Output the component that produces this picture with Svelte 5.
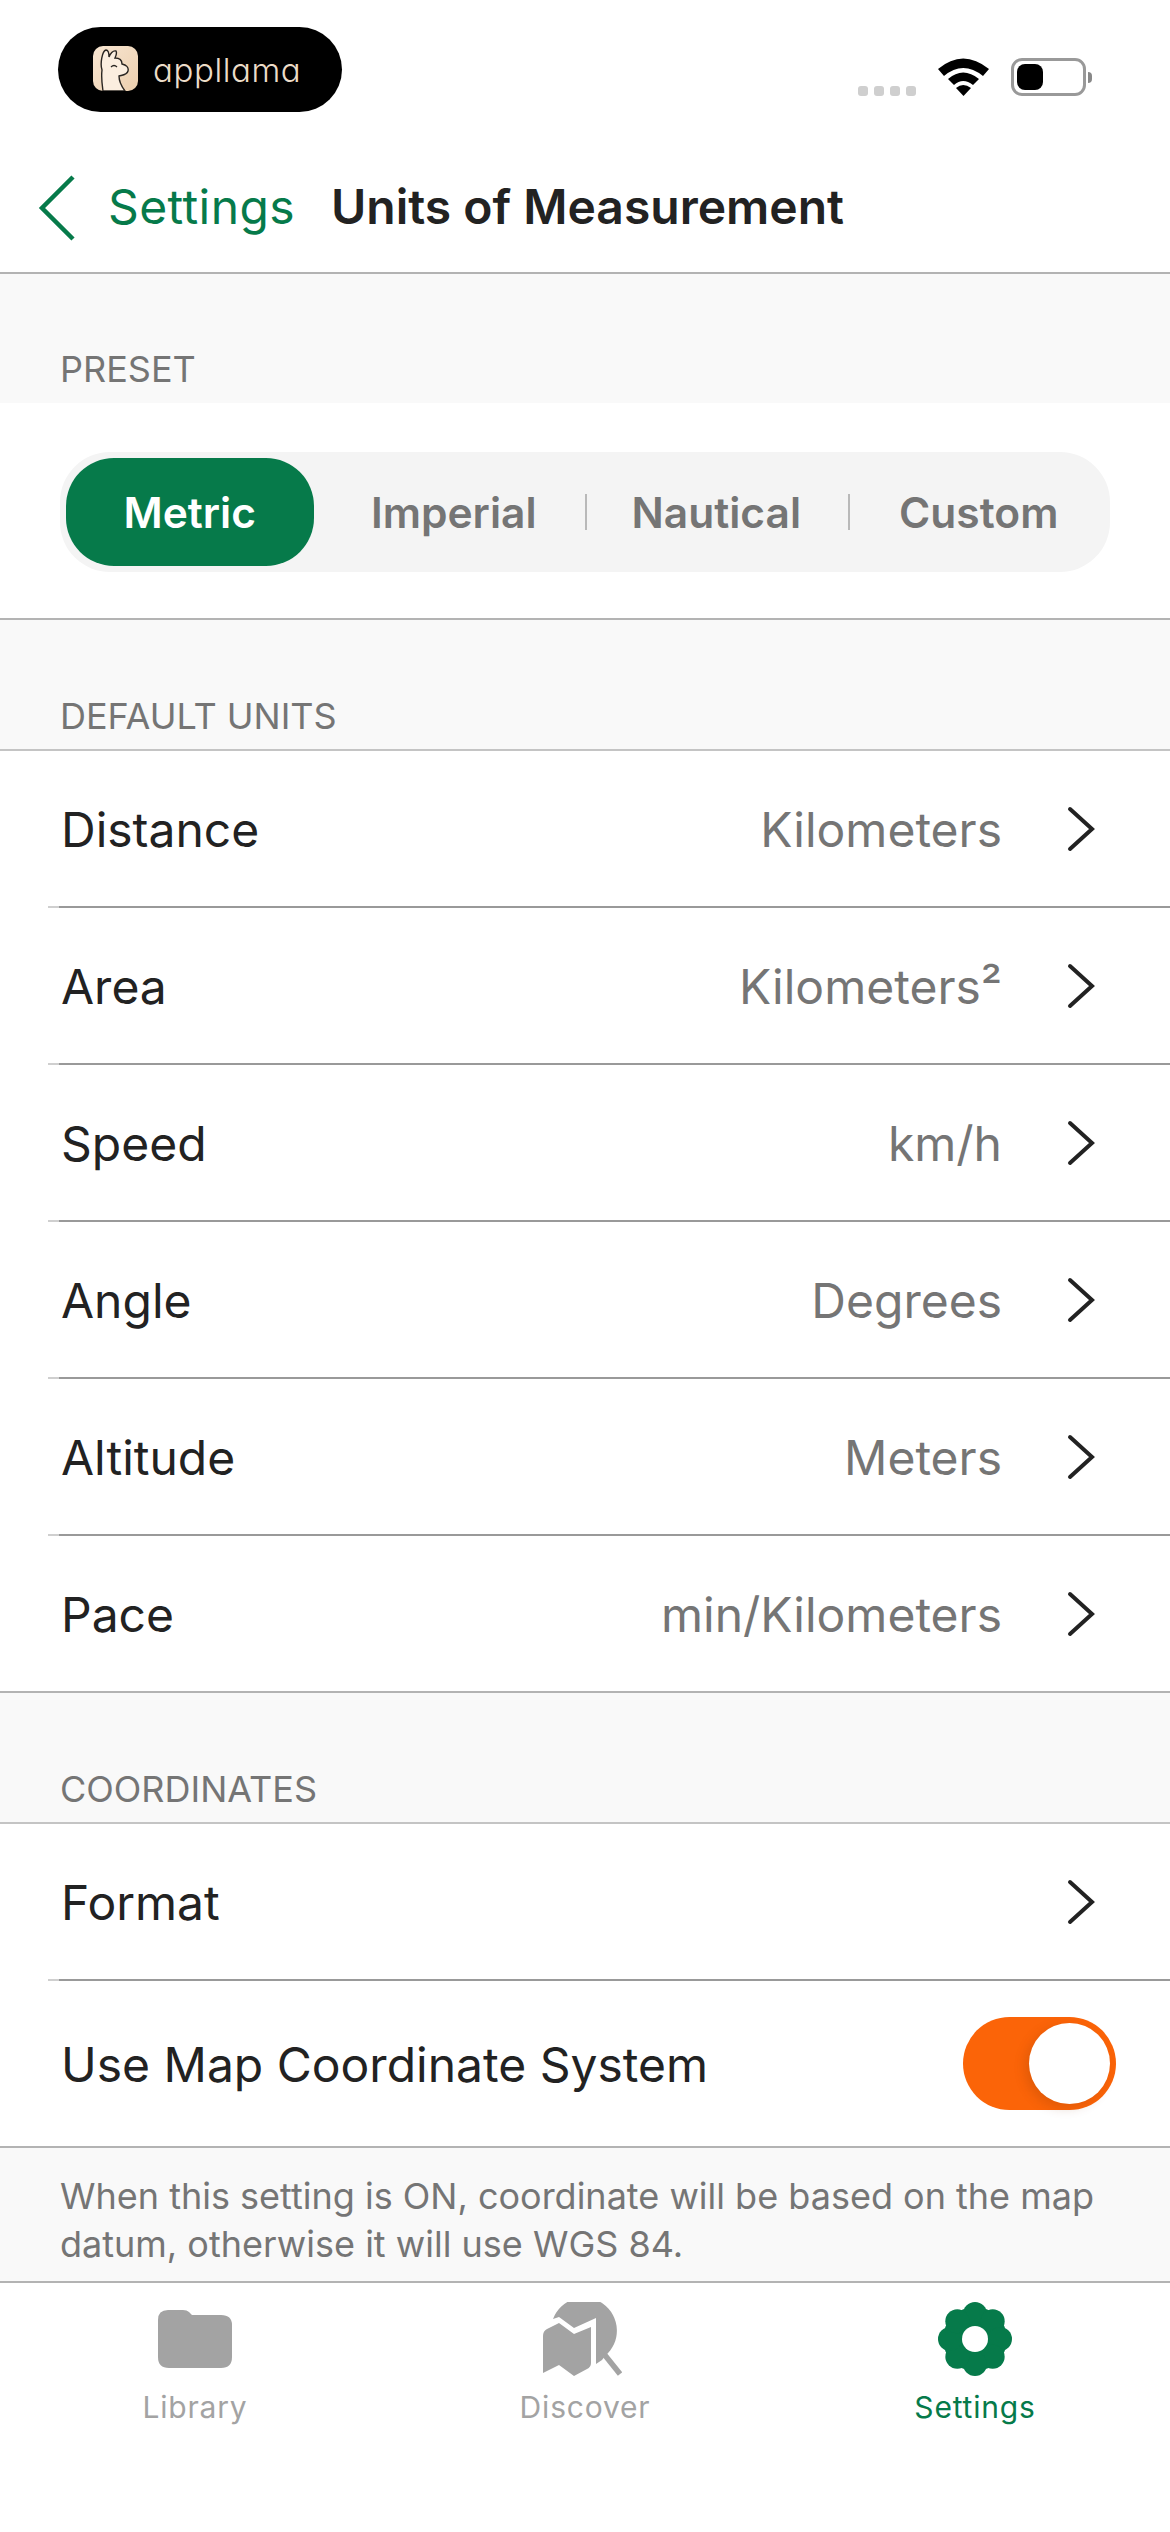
<script lang="ts">
  const presets = ["Metric", "Imperial", "Nautical", "Custom"];
  const units = [
    { name: "Distance", value: "Kilometers" },
    { name: "Area", value: "Kilometers²" },
    { name: "Speed", value: "km/h" },
    { name: "Angle", value: "Degrees" },
    { name: "Altitude", value: "Meters" },
    { name: "Pace", value: "min/Kilometers" },
  ];
  let selected = $state("Metric");
  let useMapSystem = $state(true);
  const lobes = [0, 45, 90, 135, 180, 225, 270, 315];
</script>

{#snippet chevron()}
  <svg class="chevron" width="30" height="46" viewBox="0 0 30 46">
    <path d="M4 3 L26 23 L4 43" fill="none" stroke="#222" stroke-width="4" stroke-linecap="round" />
  </svg>
{/snippet}

<div class="page">
  <div class="status">
    <div class="logo">
      <svg class="llama" width="45" height="45" viewBox="0 0 45 45">
        <defs>
          <linearGradient id="tile" x1="0" y1="0" x2="1" y2="1">
            <stop offset="0" stop-color="#f8e6d2" />
            <stop offset="1" stop-color="#eccfae" />
          </linearGradient>
        </defs>
        <rect width="45" height="45" rx="10" fill="url(#tile)" />
        <path
          d="M10 45 C9 38 8 32 9 24 C7 18 9 5 13 4 C16 4 16 9 16 11 C17 8 20 4 23 5 C24 7 23 10 22 12 C26 12 29 14 29 18 C33 19 36 21 35 25 C34 29 30 29 26 30 C26 35 29 41 32 45 Z"
          fill="#fbeedf"
          stroke="#2a2622"
          stroke-width="1.4"
        />
        <path d="M18 21 Q21 18 24 21" fill="none" stroke="#2a2622" stroke-width="1.2" />
      </svg>
      <span class="wordmark">appllama</span>
    </div>
    <div class="indicators">
      <div class="dots"><i></i><i></i><i></i><i></i></div>
      <svg width="51" height="38" viewBox="0 0 51 38">
        <path d="M0 11 Q25 -10 51 11 L45 18 Q25 2 6 18 Z" fill="#000" />
        <path d="M10 21 Q25 8 41 21 L35 27 Q25 19 16 27 Z" fill="#000" />
        <path d="M18 30 Q25 24 33 30 L25.5 38 Z" fill="#000" />
      </svg>
      <div class="battery">
        <div class="cell"><span class="charge"></span></div>
        <span class="nub"></span>
      </div>
    </div>
  </div>

  <header class="nav">
    <svg width="38" height="66" viewBox="0 0 38 66">
      <path d="M35 2 L4 33 L35 64" fill="none" stroke="#067a4a" stroke-width="4.5" />
    </svg>
    <span class="back">Settings</span>
    <h1>Units of Measurement</h1>
  </header>

  <main class="content">
    <div class="label preset-label">PRESET</div>
    <section class="preset-block">
      <div class="segments">
        {#each presets as p, i}
          <button
            class="segment"
            class:active={selected === p}
            class:divider={i === 1 || i === 2}
            onclick={() => (selected = p)}>{p}</button
          >
        {/each}
      </div>
    </section>

    <div class="label tall">DEFAULT UNITS</div>
    <section class="list">
      {#each units as u}
        <div class="row">
          <span class="name">{u.name}</span>
          <span class="value">{u.value}</span>
          {@render chevron()}
        </div>
      {/each}
    </section>

    <div class="label tall">COORDINATES</div>
    <section class="list">
      <div class="row">
        <span class="name">Format</span>
        {@render chevron()}
      </div>
      <div class="row toggle-row">
        <span class="name">Use Map Coordinate System</span>
        <button
          class="toggle"
          class:on={useMapSystem}
          aria-label="Use Map Coordinate System"
          onclick={() => (useMapSystem = !useMapSystem)}
        >
          <span class="knob"></span>
        </button>
      </div>
    </section>
    <p class="note">When this setting is ON, coordinate will be based on the map datum, otherwise it will use WGS 84.</p>
  </main>

  <nav class="tabs">
    <div class="tab">
      <div class="tab-icon">
        <svg width="74" height="58" viewBox="0 0 74 58">
          <path
            d="M0 10 Q0 0 10 0 L25 0 Q29 0 31 2 L34 5 L63 5 Q74 5 74 15 L74 47 Q74 58 63 58 L11 58 Q0 58 0 47 Z"
            fill="#a3a3a3"
          />
        </svg>
      </div>
      <span>Library</span>
    </div>
    <div class="tab">
      <div class="tab-icon discover-icon">
        <svg width="79" height="74" viewBox="0 0 79 74">
          <path d="M0 34 Q0 29 4 27 L16 21 L31 32 L48 25 L48 61 Q48 65 44 67 L31 74 L16 63 L0 71 Z" fill="#a3a3a3" />
          <path d="M10 17 A33 33 0 1 1 62 54 L59 58 L53 62 L53 16 L31 26 L16 15 Z" fill="#a3a3a3" />
          <path d="M61 52 L77 72" stroke="#a3a3a3" stroke-width="5.5" fill="none" />
        </svg>
      </div>
      <span>Discover</span>
    </div>
    <div class="tab current">
      <div class="tab-icon">
        <svg width="74" height="74" viewBox="-37 -37 74 74">
          <circle r="32" fill="#067a4a" />
          {#each lobes as a}
            <circle cx={25 * Math.sin((a * Math.PI) / 180)} cy={-25 * Math.cos((a * Math.PI) / 180)} r="12" fill="#067a4a" />
          {/each}
          <circle r="13" fill="#fff" />
        </svg>
      </div>
      <span>Settings</span>
    </div>
  </nav>
</div>

<style>
  :global(body) {
    margin: 0;
    background: #fff;
  }

  .page {
    width: 1170px;
    height: 2532px;
    display: flex;
    flex-direction: column;
    font-family: Inter, "Liberation Sans", sans-serif;
    color: #222;
    overflow: hidden;
  }

  .status {
    height: 144px;
    box-sizing: border-box;
    padding: 27px 78px 0 58px;
    display: flex;
    justify-content: space-between;
    align-items: flex-start;
  }

  .logo {
    width: 284px;
    height: 85px;
    box-sizing: border-box;
    padding: 19px 0 0 35px;
    border-radius: 43px;
    background: #000;
    display: flex;
    gap: 15px;
  }

  .llama {
    display: block;
  }

  .wordmark {
    font-family: Inter, sans-serif;
    font-feature-settings: "cv11";
    font-weight: 300;
    font-size: 33px;
    line-height: 48px;
    color: #ecdcc8;
    letter-spacing: 0.6px;
  }

  .indicators {
    margin-top: 31px;
    display: flex;
    align-items: flex-end;
    gap: 22px;
  }

  .dots {
    display: flex;
    gap: 6px;
  }

  .dots i {
    display: block;
    width: 10px;
    height: 10px;
    border-radius: 3px;
    background: #cfcfcf;
  }

  .battery {
    display: flex;
    align-items: center;
    gap: 2px;
  }

  .cell {
    width: 75px;
    height: 38px;
    box-sizing: border-box;
    border: 3px solid #999;
    border-radius: 11px;
    padding: 3px;
  }

  .charge {
    display: block;
    width: 26px;
    height: 26px;
    border-radius: 8px;
    background: #000;
  }

  .nub {
    width: 4px;
    height: 11px;
    border-radius: 0 4px 4px 0;
    background: #888;
  }

  .nav {
    height: 130px;
    box-sizing: border-box;
    padding-left: 38px;
    border-bottom: 2px solid #b3b3b3;
    display: flex;
    align-items: center;
  }

  .back {
    margin-left: 32px;
    font-size: 48px;
    letter-spacing: 0.4px;
    line-height: 56px;
    margin-bottom: 2px;
    color: #067a4a;
  }

  h1 {
    margin: 0 0 2px 36px;
    font-size: 48px;
    line-height: 56px;
    font-weight: 600;
    color: #222;
  }

  .content {
    flex: 1;
    background: #f9f9f9;
  }

  .label {
    box-sizing: border-box;
    padding-left: 60px;
    font-size: 36px;
    line-height: 44px;
    color: #757575;
  }

  .preset-label {
    height: 129px;
    padding-top: 73px;
  }

  .tall {
    height: 129px;
    padding-top: 74px;
  }

  .preset-block {
    height: 217px;
    box-sizing: border-box;
    padding-top: 49px;
    background: #fff;
    border-bottom: 2px solid #b3b3b3;
  }

  .segments {
    width: 1050px;
    height: 120px;
    box-sizing: border-box;
    margin-left: 60px;
    padding: 6px 0;
    border-radius: 50px;
    background: #f4f4f4;
    display: grid;
    grid-template-columns: repeat(4, 1fr);
  }

  .segment {
    position: relative;
    padding: 0;
    border: none;
    border-radius: 48px;
    background: none;
    font-family: inherit;
    font-size: 42.5px;
    font-weight: 600;
    color: #757575;
  }

  .segment.active {
    margin: 0 9px 0 6px;
    background: #067a4a;
    color: #fff;
  }

  .segment.divider::after {
    content: "";
    position: absolute;
    right: -2px;
    top: 36px;
    width: 2px;
    height: 36px;
    background: #b9b9b9;
  }

  .list {
    background: #fff;
    border-top: 2px solid #c4c4c4;
    border-bottom: 2px solid #b3b3b3;
  }

  .row {
    height: 157px;
    box-sizing: border-box;
    margin-left: 48px;
    padding: 0 74px 0 13px;
    display: flex;
    align-items: center;
    border-bottom: 2px solid #999;
    border-image: linear-gradient(to right, #cfcfcf 12px, #999 12px) 1;
  }

  .row:last-child {
    height: 155px;
    border-bottom: none;
  }

  .name,
  .value {
    font-size: 48px;
    line-height: 56px;
    padding-top: 2px;
  }

  .name {
    flex: 1;
  }

  .value {
    margin-right: 64px;
    color: #757575;
  }

  .chevron {
    display: block;
  }

  .row.toggle-row {
    height: 165px;
    padding-right: 54px;
  }

  .toggle {
    width: 153px;
    height: 93px;
    padding: 6px;
    border: none;
    border-radius: 47px;
    background: #ccc;
    display: flex;
    justify-content: flex-start;
  }

  .toggle.on {
    background: #fb6408;
    justify-content: flex-end;
  }

  .knob {
    width: 81px;
    height: 81px;
    border-radius: 50%;
    background: #fff;
    box-shadow: -4px 4px 12px rgba(120, 50, 0, 0.2);
  }

  .note {
    margin: 0;
    height: 133px;
    box-sizing: border-box;
    padding: 24px 60px 0;
    font-size: 36px;
    line-height: 48px;
    color: #757575;
  }

  .tabs {
    height: 251px;
    box-sizing: border-box;
    padding-top: 19px;
    background: #fff;
    border-top: 2px solid #b3b3b3;
    display: grid;
    grid-template-columns: repeat(3, 390px);
  }

  .tab {
    display: flex;
    flex-direction: column;
    align-items: center;
    font-size: 30px;
    letter-spacing: 0.8px;
    color: #a3a3a3;
  }

  .tab.current {
    color: #067a4a;
  }

  .tab-icon {
    height: 74px;
    display: flex;
    align-items: center;
    margin-bottom: 11px;
  }

  .discover-icon {
    margin-right: 5px;
  }

  .tab-icon svg {
    display: block;
  }

  .tab span {
    line-height: 40px;
  }
</style>
